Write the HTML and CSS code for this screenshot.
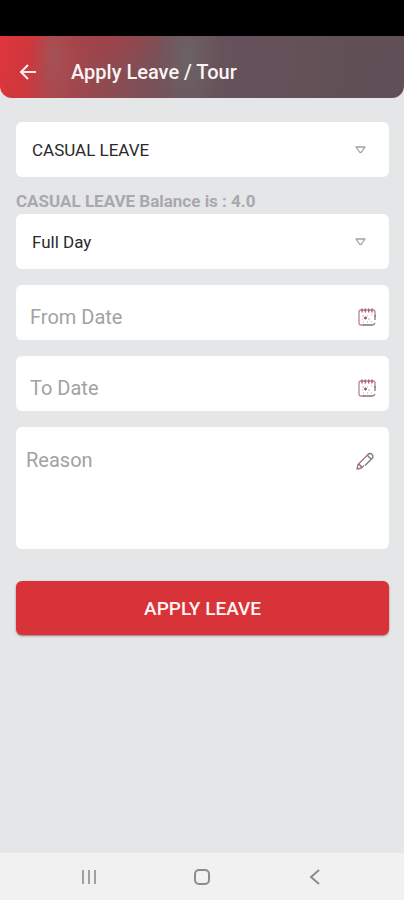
FILE: index.html
```html
<!DOCTYPE html>
<html lang="en">
<head>
  <meta charset="utf-8">
  <meta name="viewport" content="width=device-width, initial-scale=1">
  <title>Apply Leave / Tour</title>
  <link rel="stylesheet" href="styles.css">
</head>
<body>
  <div class="status-bar"></div>
  <header class="app-bar">
    <button class="icon-button" type="button" aria-label="Back">
      <svg width="18" height="18" viewBox="0 0 18 18" fill="none" stroke="#fbeeee" stroke-width="2"><path d="M17 9H2.500M9 2 2 9l7 7"/></svg>
    </button>
    <h1 class="title">Apply Leave / Tour</h1>
  </header>

  <main class="content">
    <form class="form">
      <div class="field select-field">
        <select class="control" id="leave-type" aria-label="Leave type"><option>CASUAL LEAVE</option></select>
        <svg class="chevron" width="11" height="8" viewBox="0 0 11 8" fill="none" stroke="#a89fa1" stroke-width="1.300" stroke-linejoin="round"><path d="M1 1h9L6.500 6q-1 1-2 0z"/></svg>
      </div>
      <label class="balance" for="leave-type">CASUAL LEAVE Balance is : 4.0</label>
      <div class="field select-field">
        <select class="control" aria-label="Day type"><option>Full Day</option></select>
        <svg class="chevron" width="11" height="8" viewBox="0 0 11 8" fill="none" stroke="#a89fa1" stroke-width="1.300" stroke-linejoin="round"><path d="M1 1h9L6.500 6q-1 1-2 0z"/></svg>
      </div>
      <div class="field date-field">
        <input class="control" type="text" placeholder="From Date" aria-label="From Date">
        <button class="icon-button" type="button" aria-label="Choose from date">
          <svg width="18" height="18" viewBox="0 0 18 18" fill="none"><path d="M6 17H3q-2 0-2-2V4q0-2 2-2h12q2 0 2 2v5" stroke="#c07f8e" stroke-width="1.300"/><path d="M5 17h9q2 0 3-2M17 7v5" stroke="#81747a" stroke-width="1.300"/><path d="M4 .500v4M7.300.500v4M10.700.500v4M14 .500v4" stroke="#a9566a" stroke-width="1.300"/><path d="M4 8h2m3 0h1m3-1h1M4 11h1m5 0h2M5 14h1m3 0h1m3 0h1" stroke="#c5a9b0"/><path d="M6 10h3M7.500 8.500v3" stroke="#875763" stroke-width="1.300"/></svg>
        </button>
      </div>
      <div class="field date-field">
        <input class="control" type="text" placeholder="To Date" aria-label="To Date">
        <button class="icon-button" type="button" aria-label="Choose to date">
          <svg width="18" height="18" viewBox="0 0 18 18" fill="none"><path d="M6 17H3q-2 0-2-2V4q0-2 2-2h12q2 0 2 2v5" stroke="#c07f8e" stroke-width="1.300"/><path d="M5 17h9q2 0 3-2M17 7v5" stroke="#81747a" stroke-width="1.300"/><path d="M4 .500v4M7.300.500v4M10.700.500v4M14 .500v4" stroke="#a9566a" stroke-width="1.300"/><path d="M4 8h2m3 0h1m3-1h1M4 11h1m5 0h2M5 14h1m3 0h1m3 0h1" stroke="#c5a9b0"/><path d="M6 10h3M7.500 8.500v3" stroke="#875763" stroke-width="1.300"/></svg>
        </button>
      </div>
      <div class="field reason-field">
        <textarea class="control" placeholder="Reason" aria-label="Reason"></textarea>
        <svg width="18" height="18" viewBox="0 0 18 18" fill="none" stroke-width="1.300" stroke-linejoin="round"><path d="M8 13.500 5.500 16 1 17l1-4.500L12.500 2" stroke="#b0717f"/><path d="M12 2.500q2-2 4 0t0 4L9 13.500M11.500 3.500l3.500 3.500M2 12.500q3 0 3.500 3.500" stroke="#80747a"/></svg>
      </div>
      <button class="submit" type="submit">APPLY LEAVE</button>
    </form>
  </main>

  <nav class="nav-bar" aria-label="System">
    <button class="icon-button" type="button" aria-label="Recent apps">
      <svg width="16" height="16" viewBox="0 0 16 16" stroke="#a0a0a0" stroke-width="2"><path d="M2 1v14M8 1v14M14 1v14"/></svg>
    </button>
    <button class="icon-button" type="button" aria-label="Home">
      <svg width="18" height="18" viewBox="0 0 18 18" fill="none" stroke="#8c8c8c" stroke-width="2"><rect x="2" y="2" width="14" height="14" rx="4"/></svg>
    </button>
    <button class="icon-button" type="button" aria-label="Back">
      <svg width="16" height="16" viewBox="0 0 16 16" fill="none" stroke="#8c8c8c" stroke-width="2"><path d="M12 1 4 8l8 7"/></svg>
    </button>
  </nav>
</body>
</html>
```
FILE: styles.css
```css
* {
  box-sizing: border-box;
}

body {
  display: flex;
  flex-direction: column;
  min-height: 100vh;
  margin: 0;
  background: #e5e6e8;
  font-family: Roboto, sans-serif;
}

.status-bar {
  height: 36px;
  background: #000;
}

.app-bar {
  display: flex;
  align-items: center;
  gap: 34px;
  height: 62px;
  padding: 9px 19px 0;
  border-radius: 0 0 12px 12px;
  background:
    radial-gradient(ellipse 34px 80px at 188px 24px, rgba(106, 100, 104, 0.9), transparent),
    radial-gradient(ellipse 60px 34px at 110px 0, rgba(168, 60, 68, 0.6), transparent),
    radial-gradient(ellipse 22px 60px at 54px 20px, rgba(150, 92, 94, 0.6), transparent),
    linear-gradient(100deg, #de373c 0, #cf373c 30px, #b5434a 56px, #95494f 100px, #7c5056 150px, #66525a 220px, #604f56 100%);
}

.title {
  margin: 0;
  color: #fbf4f4;
  font-size: 20px;
  font-weight: 500;
  line-height: 24px;
}

.icon-button {
  display: flex;
  padding: 0;
  border: 0;
  background: none;
}

.content {
  flex: 1;
  padding: 24px 15px 24px 16px;
}

.form {
  display: flex;
  flex-direction: column;
}

.field {
  display: flex;
  align-items: center;
  height: 55px;
  margin-bottom: 16px;
  border-radius: 6px;
  background: #fff;
}

.control {
  flex: 1;
  min-width: 0;
  padding: 0;
  border: 0;
  outline: 0;
  background: none;
  color: #29292b;
  font-family: inherit;
  font-size: 20px;
  line-height: 24px;
}

.control::placeholder {
  color: #a2a2a2;
  opacity: 1;
}

.select-field {
  position: relative;
}

.select-field .control {
  height: 100%;
  padding: 0 48px 0 16px;
  appearance: none;
  font-size: 17px;
}

.chevron {
  position: absolute;
  right: 23px;
  pointer-events: none;
}

.balance {
  margin-bottom: 3px;
  color: #a8a9ad;
  font-size: 17px;
  font-weight: 700;
  line-height: 20px;
}

.select-field:first-child {
  margin-bottom: 14px;
}

.date-field {
  padding: 8px 13px 0 14px;
}

.reason-field {
  align-items: flex-start;
  height: auto;
  min-height: 122px;
  margin-bottom: 32px;
  padding: 21px 15px 8px 10px;
}

.reason-field .control {
  height: 92px;
  resize: none;
}

.reason-field svg {
  margin-top: 4px;
}

.submit {
  height: 54px;
  border: 0;
  border-radius: 6px;
  background: #d83338;
  box-shadow: 0 1px 2px rgba(60, 20, 20, 0.5);
  color: #fff4f4;
  font-family: inherit;
  font-size: 19px;
  font-weight: 500;
}

.nav-bar {
  display: flex;
  justify-content: space-between;
  align-items: center;
  height: 47px;
  padding: 0 20%;
  background: #f1f1f1;
}
```
